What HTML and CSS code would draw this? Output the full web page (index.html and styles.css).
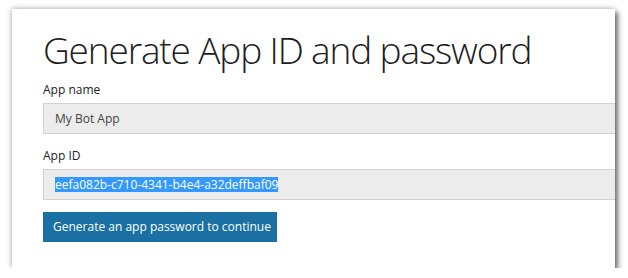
FILE: index.html
```html
<!DOCTYPE html>
<html>
<head>
<meta charset="utf-8">
<link rel="stylesheet" href="styles.css">
</head>
<body>
<div class="card">
  <h1 class="title">Generate App ID and password</h1>
  <div class="field">
    <div class="label">App name</div>
    <div class="input">My Bot App</div>
  </div>
  <div class="field field-second">
    <div class="label">App ID</div>
    <div class="input"><span class="sel">eefa082b-c710-4341-b4e4-a32deffbaf09</span></div>
  </div>
  <div class="btn">Generate an app password to continue</div>
</div>
</body>
</html>
```

FILE: styles.css
```css
html, body {
  margin: 0;
  padding: 0;
  background: #ffffff;
}
body {
  padding: 9px 0 0 12px;
  font-family: "Open Sans", "Noto Sans", sans-serif;
}
.card {
  width: 603px;
  height: 259px;
  box-sizing: border-box;
  background: #fff;
  box-shadow: 3px 3px 5px rgba(0,0,0,0.55), -1px -1px 5px rgba(0,0,0,0.22);
  padding: 18px 0 0 31px;
  overflow: hidden;
}
.title {
  margin: 0;
  font-weight: 300;
  font-size: 37px;
  line-height: 46px;
  letter-spacing: -1.15px;
  color: #1e1e1e;
}
.field {
  display: flex;
  flex-direction: column;
}
.field-second {
  margin-top: 5px;
}
.label {
  font-size: 12px;
  line-height: 18px;
  color: #222;
  margin-top: 8px;
  margin-bottom: 4px;
}
.input {
  height: 31px;
  box-sizing: border-box;
  background: #ececec;
  border: 1px solid #d2d2d2;
  border-right: none;
  padding-left: 11px;
  font-size: 12px;
  line-height: 29px;
  color: #444;
  display: flex;
  align-items: center;
}
.sel {
  background: #3399ff;
  color: #fff;
  line-height: 15px;
}
.btn {
  margin-top: 12px;
  width: 234px;
  height: 30px;
  box-sizing: border-box;
  background: #1a70a2;
  color: #fff;
  font-size: 12px;
  line-height: 30px;
  padding-left: 10px;
  white-space: nowrap;
}
```
